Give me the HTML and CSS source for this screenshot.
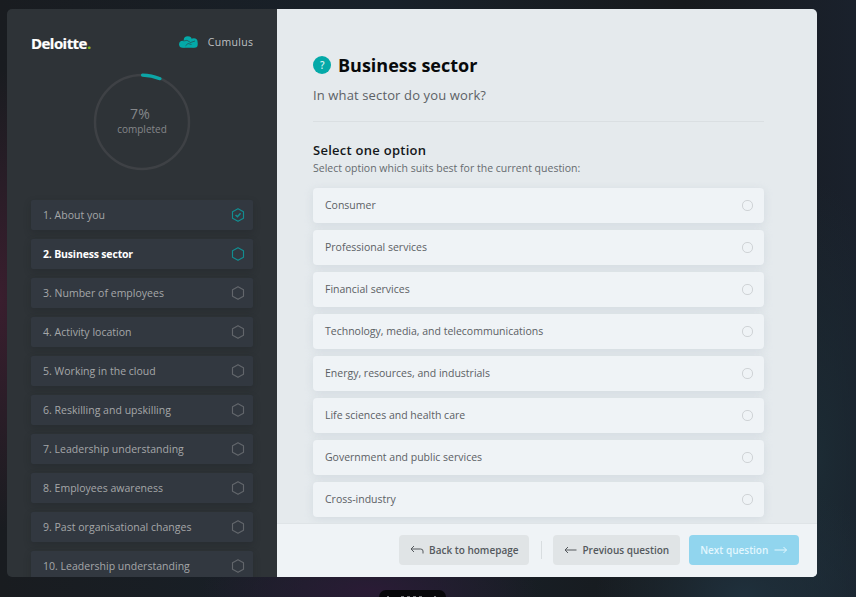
FILE: index.html
```html
<!DOCTYPE html>
<html lang="en">
<head>
<meta charset="utf-8">
<title>Cumulus – Business sector</title>
<link rel="stylesheet" href="styles.css">
</head>
<body>
<svg class="defs" aria-hidden="true">
  <symbol id="hex" viewBox="0 0 14 14"><path d="M7 .7 12.500 3.800V10.200L7 13.300 1.500 10.200V3.800Z" fill="none" stroke="currentColor" stroke-width="1.150" stroke-linejoin="round"/></symbol>
  <symbol id="hex-check" viewBox="0 0 14 14"><path d="M7 .7 12.500 3.800V10.200L7 13.300 1.500 10.200V3.800Z" fill="none" stroke="currentColor" stroke-width="1.150" stroke-linejoin="round"/><path d="M4.500 7 6.400 8.700 9.600 5.300" fill="none" stroke="currentColor" stroke-width="1.600"/></symbol>
</svg>
<div class="window">
  <aside class="sidebar">
    <header class="brand">
      <div class="logo">Deloitte<i>.</i></div>
      <div class="product">
        <svg width="19" height="12" viewBox="0 0 19 12"><g fill="#04a9a8"><circle cx="3.600" cy="8.200" r="3.500"/><circle cx="8.800" cy="4.300" r="4.100"/><circle cx="14.800" cy="6" r="3.800"/><circle cx="15.500" cy="8.500" r="3.200"/><rect x="3" y="5" width="13" height="6.700" rx="2"/></g><path d="M4.500 5 8 4.300 11.500 6.500 16 5M6.500 9.800 9 7.500 12.500 8.500" fill="none" stroke="#2e3337" stroke-width=".8" opacity=".7"/></svg>
        <span>Cumulus</span>
      </div>
    </header>
    <div class="progress">
      <svg class="ring" width="98" height="98" viewBox="0 0 98 98"><circle cx="49" cy="49" r="47" fill="none" stroke="#3e4145" stroke-width="2.500"/><path d="M49.500 2.100A47 47 0 0 1 67 5.700" fill="none" stroke="#0ca5a6" stroke-width="3.200" stroke-linecap="round"/></svg>
      <div class="progress-text"><strong>7%</strong><span>completed</span></div>
    </div>
    <ol class="steps">
      <li><span>1. About you</span><svg class="done"><use href="#hex-check"/></svg></li>
      <li class="current"><span>2. Business sector</span><svg class="done"><use href="#hex"/></svg></li>
      <li><span>3. Number of employees</span><svg><use href="#hex"/></svg></li>
      <li><span>4. Activity location</span><svg><use href="#hex"/></svg></li>
      <li><span>5. Working in the cloud</span><svg><use href="#hex"/></svg></li>
      <li><span>6. Reskilling and upskilling</span><svg><use href="#hex"/></svg></li>
      <li><span>7. Leadership understanding</span><svg><use href="#hex"/></svg></li>
      <li><span>8. Employees awareness</span><svg><use href="#hex"/></svg></li>
      <li><span>9. Past organisational changes</span><svg><use href="#hex"/></svg></li>
      <li><span>10. Leadership understanding</span><svg><use href="#hex"/></svg></li>
    </ol>
  </aside>
  <main class="main">
    <section class="content">
      <div class="title"><span class="help">?</span><h1>Business sector</h1></div>
      <p class="question">In what sector do you work?</p>
      <h2>Select one option</h2>
      <p class="hint">Select option which suits best for the current question:</p>
      <ul class="options">
        <li>Consumer<i></i></li>
        <li>Professional services<i></i></li>
        <li>Financial services<i></i></li>
        <li>Technology, media, and telecommunications<i></i></li>
        <li>Energy, resources, and industrials<i></i></li>
        <li>Life sciences and health care<i></i></li>
        <li>Government and public services<i></i></li>
        <li>Cross-industry<i></i></li>
      </ul>
    </section>
    <footer class="actions">
      <button class="back"><svg width="14" height="10" viewBox="0 0 14 10"><path d="M4 1 1 4 4 7M1 4H10.500Q13 4 13 6V8.500" fill="none" stroke="currentColor"/></svg>Back to homepage</button>
      <span class="divider"></span>
      <button class="prev"><svg width="13" height="8" viewBox="0 0 13 8"><path d="M4 1 1 4 4 7M1 4H12.500" fill="none" stroke="currentColor"/></svg>Previous question</button>
      <button class="next">Next question<svg width="14" height="8" viewBox="0 0 14 8"><path d="M9.500 1 12.500 4 9.500 7M.5 4H12.500" fill="none" stroke="currentColor"/></svg></button>
    </footer>
  </main>
</div>
<div class="pager"><svg width="67" height="7" viewBox="0 0 67 7"><path d="M8 6.500H10M22 6.500H25M28 6.500H31M34 6.500H37M40 6.500H43M55 6.500H57" stroke="#77787c" stroke-width="1"/></svg></div>
</body>
</html>
```
FILE: styles.css
```css
* { box-sizing: border-box; margin: 0; padding: 0; }
body {
  width: 856px; height: 597px; overflow: hidden; position: relative;
  padding: 8.500px 0 0 7.300px;
  font-family: "Open Sans", "Noto Sans", sans-serif;
  background:
    radial-gradient(ellipse 60px 230px at 0 300px, #3a1e2e, transparent),
    radial-gradient(ellipse 170px 50px at 370px 590px, #2a1b35, transparent),
    radial-gradient(ellipse 150px 120px at 745px 597px, #1f303c, transparent),
    radial-gradient(ellipse 70px 280px at 820px 460px, #1c2b34, transparent),
    linear-gradient(90deg, #191c20, #18212a 45%, #171a1d 80%, #1a212c);
}
.defs { position: absolute; width: 0; height: 0; }
.window { display: flex; width: 810px; height: 568.500px; border-radius: 5px; overflow: hidden; }
.sidebar { width: 269.700px; flex: none; padding: 24px 24px 0 23.700px; background: #2e3337; overflow: hidden; }
.brand { display: flex; justify-content: space-between; align-items: center; height: 20px; }
.logo { font-weight: 700; font-size: 15px; letter-spacing: -.55px; color: #fff; line-height: 18px; -webkit-text-stroke: .2px; }
.logo i { font-style: normal; color: #86b81f; }
.product { display: flex; gap: 9.500px; align-items: center; margin-top: -1.500px; font-size: 10.500px; letter-spacing: .3px; color: #bec0c2; }
.product span { margin-right: -.3px; }
.progress { width: 98px; height: 98px; margin: 20.500px auto 0; display: grid; place-items: center; }
.ring { grid-area: 1 / 1; }
.progress-text { grid-area: 1 / 1; display: flex; flex-direction: column; align-items: center; color: #85878a; margin-top: -2px; }
.progress-text strong { font-size: 14px; font-weight: 400; line-height: 16px; margin-right: 4px; letter-spacing: .2px; }
.progress-text span { font-size: 10px; line-height: 14px; }
.steps { list-style: none; margin-top: 29px; display: flex; flex-direction: column; gap: 9px; }
.steps li {
  height: 30px; flex: none; display: flex; align-items: center; justify-content: space-between;
  padding: 0 8px 0 12px; border-radius: 2px; background: #323840; color: #a5a7a9; font-size: 10.500px;
  letter-spacing: .02px; box-shadow: 0 3px 7px rgba(25, 28, 32, .25);
}
.steps .current { color: #fff; font-weight: 700; letter-spacing: -.17px; }
.steps svg { width: 14px; height: 14px; color: #62666b; }
.steps .done { color: #128d91; }
.main { flex: 1; display: flex; flex-direction: column; background: #e5eaed; min-width: 0; }
.content { flex: 1; min-height: 0; overflow: hidden; padding: 43px 53.500px 0 36px; }
.title { display: flex; align-items: center; gap: 6.500px; height: 27px; }
.help { width: 18.500px; height: 18.500px; border-radius: 50%; background: #04a9a8; color: #d5f1f1; font-size: 10px; font-weight: 600; line-height: 18.500px; text-align: center; }
h1 { font-size: 18px; line-height: 27px; font-weight: 700; color: #080a0c; }
.question { font-size: 13px; line-height: 20px; margin-top: 6px; height: 37px; border-bottom: 1px solid #dadfe2; color: #5c6165; font-weight: 500; letter-spacing: .13px; }
h2 { font-size: 13px; line-height: 18px; margin-top: 19px; font-weight: 600; color: #14171a; letter-spacing: .27px; }
.hint { font-size: 10.500px; line-height: 16px; margin-top: 1px; color: #666b6f; }
.options { list-style: none; margin-top: 12px; display: flex; flex-direction: column; gap: 7px; }
.options li {
  height: 35px; flex: none; display: flex; align-items: center; justify-content: space-between;
  padding: 0 11px 0 12px; border-radius: 4px; background: #eff3f6; color: #5b6064; font-size: 10.500px;
  box-shadow: 0 2px 9px rgba(175, 187, 199, .32);
}
.options i { width: 11px; height: 11px; border: 1.500px solid #cfd3d6; border-radius: 5px; }
.actions { height: 54px; flex: none; display: flex; align-items: center; padding: 0 18px 1px 0; justify-content: flex-end; background: #eff3f6; border-top: 1px solid #dfe4e7; }
button { height: 30px; border: 0; border-radius: 4px; font: 600 10px/30px "Open Sans", sans-serif; display: flex; align-items: center; justify-content: center; gap: 5px; background: #e0e4e6; color: #54595d; white-space: nowrap; }
.back { width: 130px; }
.divider { width: 1px; height: 18px; background: #d8dde0; margin: 0 11px 0 12px; }
.prev { width: 127px; }
.next { width: 110px; margin-left: 9px; background: #91d5ee; color: #e3f7fe; gap: 6px; }
.pager { position: absolute; left: 379px; top: 590px; width: 67px; height: 7px; overflow: hidden; border-radius: 7px 7px 0 0; background: #07070a; }
.pager svg { display: block; }
```
